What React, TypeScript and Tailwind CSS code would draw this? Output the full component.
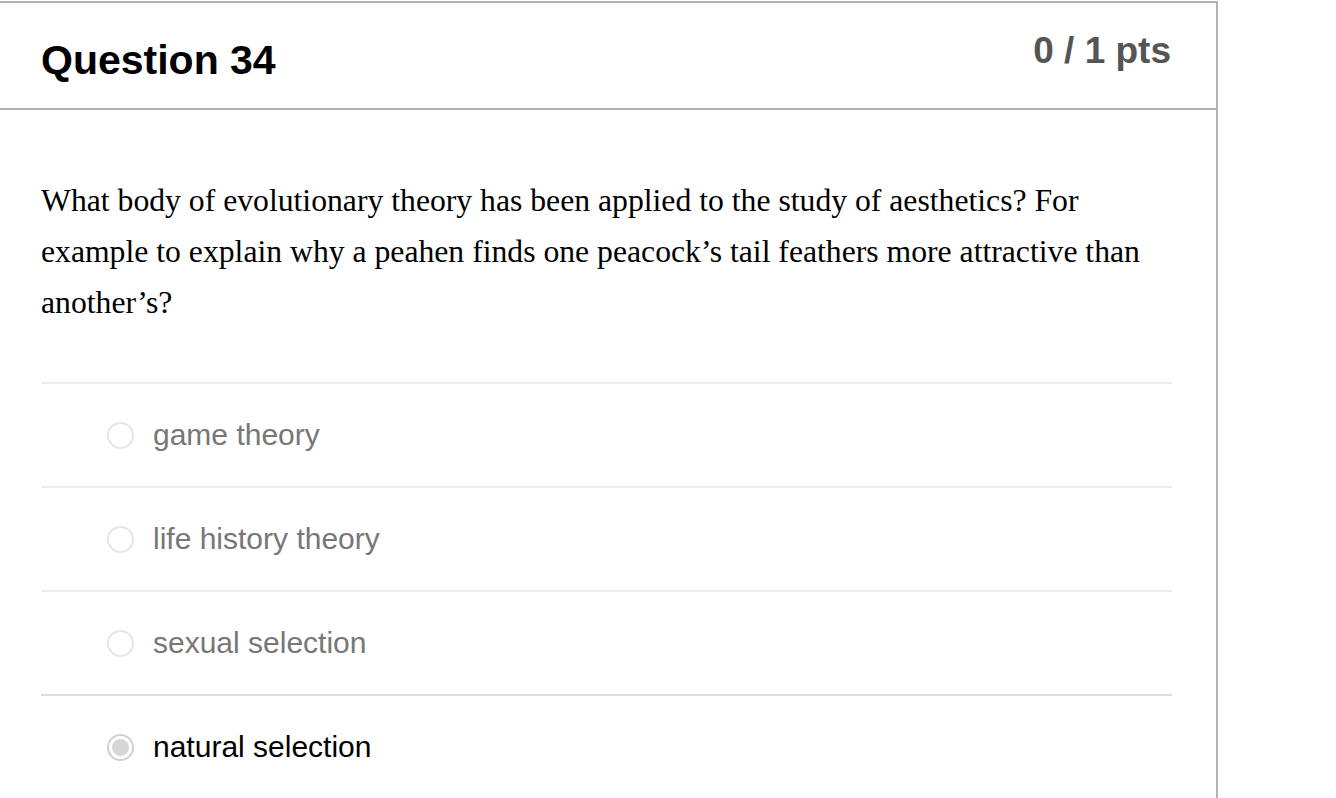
import React from "react";

const options = [
  { label: "game theory", selected: false },
  { label: "life history theory", selected: false },
  { label: "sexual selection", selected: false },
  { label: "natural selection", selected: true },
];

function Radio({ selected }: { selected: boolean }) {
  if (selected) {
    return (
      <span className="flex h-[27px] w-[27px] shrink-0 items-center justify-center rounded-full border-2 border-[#d0d0d0] bg-white">
        <span className="h-[17px] w-[17px] rounded-full bg-[#d6d6d6]" />
      </span>
    );
  }
  return <span className="block h-[27px] w-[27px] shrink-0 rounded-full border-2 border-[#e6e6e6] bg-white" />;
}

export default function App() {
  return (
    <div className="min-h-[798px] w-[1336px] bg-white" style={{ fontFamily: '"Liberation Sans", Arial, sans-serif' }}>
      <div className="mt-px w-[1218px] border-t-2 border-r-2 border-[#b3b3b3] pb-[40px]">
        <div className="flex h-[107px] items-start justify-between border-b-2 border-[#b3b3b3] pl-[41px] pr-[45px]">
          <h2 className="mt-[34px] text-[41px] font-bold leading-[46px] text-black">Question 34</h2>
          <div className="mt-[27px] text-[37px] font-bold leading-[42px] text-[#555555]">0 / 1 pts</div>
        </div>
        <div className="pl-[41px] pr-[44px]">
          <p
            className="pt-[65px] text-[31.7px] leading-[51px] text-black"
            style={{ fontFamily: '"Liberation Serif", "Times New Roman", serif' }}
          >
            What body of evolutionary theory has been applied to the study of aesthetics? For example to explain why a
            peahen finds one peacock’s tail feathers more attractive than another’s?
          </p>
          <div className="mt-[54px]">
            {options.map((o, i) => (
              <div
                key={o.label}
                className={`flex h-[104px] items-center border-t-2 pl-[66px] ${i === 3 ? "border-[#dcdcdc]" : "border-[#ececec]"}`}
              >
                <Radio selected={o.selected} />
                <span className={`ml-[19px] text-[30px] leading-[34px] ${o.selected ? "text-black" : "text-[#777777]"}`}>
                  {o.label}
                </span>
              </div>
            ))}
          </div>
        </div>
      </div>
    </div>
  );
}
